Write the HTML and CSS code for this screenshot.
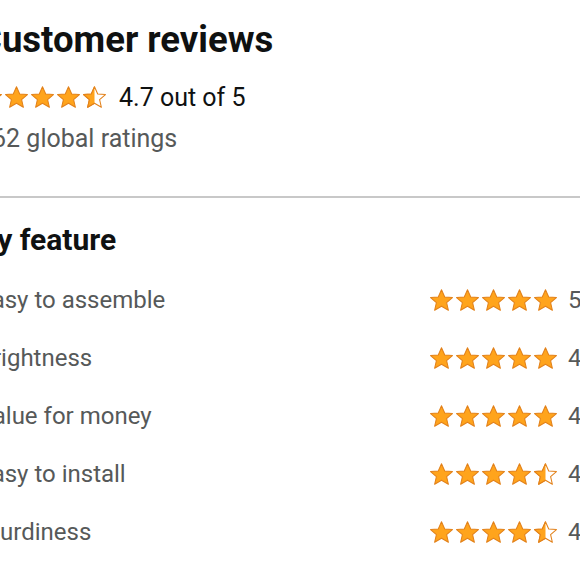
FILE: index.html
```html
<!DOCTYPE html>
<html>
<head>
<meta charset="utf-8">
<link rel="stylesheet" href="styles.css">
</head>
<body>
<svg width="0" height="0" class="defs">
  <defs>
    <symbol id="star-full" viewBox="0 0 24 24">
      <path d="M12 1.6l3.1 7 7.4.6-5.6 4.9 1.7 7.3L12 17.5 5.4 21.4l1.7-7.3L1.5 9.2l7.4-.6z" fill="#FFA41C" stroke="#E2811A" stroke-width="1" stroke-linejoin="round"/>
    </symbol>
    <clipPath id="half-clip"><rect x="0" y="0" width="12" height="24"/></clipPath>
    <symbol id="star-half" viewBox="0 0 24 24">
      <path d="M12 1.6l3.1 7 7.4.6-5.6 4.9 1.7 7.3L12 17.5 5.4 21.4l1.7-7.3L1.5 9.2l7.4-.6z" fill="#fff" stroke="#E2811A" stroke-width="1" stroke-linejoin="round"/>
      <path d="M12 1.6l3.1 7 7.4.6-5.6 4.9 1.7 7.3L12 17.5 5.4 21.4l1.7-7.3L1.5 9.2l7.4-.6z" fill="#FFA41C" stroke="#E2811A" stroke-width="1" stroke-linejoin="round" clip-path="url(#half-clip)"/>
    </symbol>
  </defs>
</svg>
<div class="page">
  <section class="summary">
    <h2 class="title">Customer reviews</h2>
    <div class="overall">
      <span class="stars stars-lg">
        <svg class="star"><use href="#star-full"/></svg><svg class="star"><use href="#star-full"/></svg><svg class="star"><use href="#star-full"/></svg><svg class="star"><use href="#star-full"/></svg><svg class="star"><use href="#star-half"/></svg>
      </span>
      <span class="overall-text">4.7 out of 5</span>
    </div>
    <div class="count">162 global ratings</div>
  </section>
  <hr class="divider">
  <section class="features">
    <h3 class="subtitle">By feature</h3>
    <div class="rows">
      <div class="row">
        <span class="label">Easy to assemble</span>
        <span class="stars"><svg class="star"><use href="#star-full"/></svg><svg class="star"><use href="#star-full"/></svg><svg class="star"><use href="#star-full"/></svg><svg class="star"><use href="#star-full"/></svg><svg class="star"><use href="#star-full"/></svg></span>
        <span class="value">5.0</span>
      </div>
      <div class="row">
        <span class="label">Brightness</span>
        <span class="stars"><svg class="star"><use href="#star-full"/></svg><svg class="star"><use href="#star-full"/></svg><svg class="star"><use href="#star-full"/></svg><svg class="star"><use href="#star-full"/></svg><svg class="star"><use href="#star-full"/></svg></span>
        <span class="value">4.9</span>
      </div>
      <div class="row">
        <span class="label">Value for money</span>
        <span class="stars"><svg class="star"><use href="#star-full"/></svg><svg class="star"><use href="#star-full"/></svg><svg class="star"><use href="#star-full"/></svg><svg class="star"><use href="#star-full"/></svg><svg class="star"><use href="#star-full"/></svg></span>
        <span class="value">4.8</span>
      </div>
      <div class="row">
        <span class="label">Easy to install</span>
        <span class="stars"><svg class="star"><use href="#star-full"/></svg><svg class="star"><use href="#star-full"/></svg><svg class="star"><use href="#star-full"/></svg><svg class="star"><use href="#star-full"/></svg><svg class="star"><use href="#star-half"/></svg></span>
        <span class="value">4.6</span>
      </div>
      <div class="row">
        <span class="label">Sturdiness</span>
        <span class="stars"><svg class="star"><use href="#star-full"/></svg><svg class="star"><use href="#star-full"/></svg><svg class="star"><use href="#star-full"/></svg><svg class="star"><use href="#star-full"/></svg><svg class="star"><use href="#star-half"/></svg></span>
        <span class="value">4.5</span>
      </div>
    </div>
  </section>
</div>
</body>
</html>
```
FILE: styles.css
```css
html, body {
  margin: 0;
  padding: 0;
  background: #fff;
  overflow: hidden;
}
.defs {
  position: absolute;
  width: 0;
  height: 0;
}
.page {
  width: 626px;
  margin-left: -22px;
  font-family: Roboto, "Liberation Sans", sans-serif;
  color: #0F1111;
}
.summary {
  padding-top: 18px;
}
.title {
  margin: 0;
  font-size: 36.5px;
  line-height: 44px;
  font-weight: 700;
}
.overall {
  display: flex;
  align-items: center;
  gap: 12px;
  margin-top: 18px;
  height: 34px;
}
.stars {
  display: flex;
  gap: 1px;
}
.star {
  width: 25px;
  height: 25px;
  display: block;
}
.overall-text {
  font-size: 25px;
}
.count {
  margin-top: 11px;
  font-size: 25px;
  line-height: 28px;
  color: #565959;
}
.divider {
  border: 0;
  border-top: 2px solid #c8c8c8;
  margin: 43px 0 0 0;
}
.subtitle {
  margin: 24px 0 0;
  font-size: 30px;
  line-height: 36px;
  font-weight: 700;
}
.rows {
  margin-top: 13px;
}
.row {
  display: flex;
  align-items: center;
  height: 58px;
  font-size: 24px;
  color: #565959;
}
.label {
  flex: 1;
}
.value {
  width: 36px;
  margin-left: 10px;
}
```
